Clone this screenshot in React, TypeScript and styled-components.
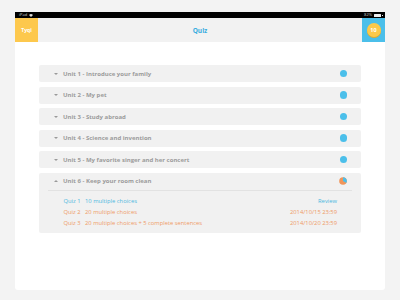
import React from "react";
import styled, { createGlobalStyle } from "styled-components";

const GlobalStyle = createGlobalStyle`
  html, body {
    margin: 0;
    padding: 0;
    background: #f3f3f3;
    font-family: "Open Sans", "Liberation Sans", sans-serif;
  }
`;

const Page = styled.div`
  width: 400px;
  height: 300px;
  box-sizing: border-box;
  padding: 12px 15px 10px;
  background: #f3f3f3;
`;

const Device = styled.div`
  height: 278px;
  background: #ffffff;
  border-radius: 0 0 3px 3px;
  display: flex;
  flex-direction: column;
  overflow: hidden;
`;

const StatusBar = styled.div`
  height: 6px;
  background: #000;
  color: #cfcfcf;
  font-size: 4px;
  line-height: 6px;
  display: flex;
  align-items: center;
  justify-content: space-between;
  padding: 0 4px;
`;

const StatusGroup = styled.div`
  display: flex;
  align-items: center;
  gap: 2px;
`;

const Battery = styled.span`
  width: 7px;
  height: 3px;
  background: #eee;
  border-radius: 0.5px;
  position: relative;
  &::after {
    content: "";
    position: absolute;
    right: -1.5px;
    top: 1px;
    width: 1px;
    height: 1px;
    background: #eee;
  }
`;

const Header = styled.div`
  height: 24px;
  background: #f2f2f2;
  display: flex;
  align-items: stretch;
`;

const CornerButton = styled.div<{ $bg: string }>`
  width: 23px;
  background: ${p => p.$bg};
  display: flex;
  align-items: center;
  justify-content: center;
  color: #fff;
  font-weight: 700;
  font-size: 5px;
`;

const Title = styled.div`
  flex: 1;
  display: flex;
  align-items: center;
  justify-content: center;
  color: #38ade0;
  font-weight: 700;
  font-size: 6.5px;
`;

const Coin = styled.div`
  width: 14px;
  height: 14px;
  border-radius: 50%;
  background: #fcc94b;
  box-shadow: 0 1px 0 #e0a92c;
  display: flex;
  align-items: center;
  justify-content: center;
  color: #fff;
  font-size: 5.5px;
  font-weight: 700;
`;

const Content = styled.div`
  padding: 23px 24px 0;
  display: flex;
  flex-direction: column;
  gap: 4.5px;
`;

const Unit = styled.div`
  background: #f1f1f1;
  border-radius: 2px;
`;

const UnitHead = styled.div<{ $open?: boolean }>`
  height: 17px;
  display: flex;
  align-items: center;
  padding: ${p => (p.$open ? "0 5px 0 6px" : "0 14px 0 15px")};
  margin: ${p => (p.$open ? "0 9px" : "0")};
  border-bottom: ${p => (p.$open ? "1px solid #e2e2e2" : "none")};
`;

const Arrow = styled.span<{ $up?: boolean }>`
  width: 0;
  height: 0;
  border-left: 2px solid transparent;
  border-right: 2px solid transparent;
  ${p =>
    p.$up
      ? "border-bottom: 2.5px solid #9a9a9a;"
      : "border-top: 2.5px solid #9a9a9a;"}
  margin-right: 5px;
`;

const UnitName = styled.span`
  flex: 1;
  color: #9c9c9c;
  font-weight: 700;
  font-size: 6px;
`;

const Dot = styled.span`
  width: 7.5px;
  height: 7.5px;
  border-radius: 50%;
  background: #4bbfea;
`;

const QuizList = styled.div`
  padding: 5.5px 24px 5px 24.5px;
  display: flex;
  flex-direction: column;
`;

const QuizRow = styled.div<{ $color: string }>`
  height: 10.7px;
  display: flex;
  align-items: center;
  color: ${p => p.$color};
  font-size: 5.8px;
`;

const QuizLabel = styled.span`
  width: 21.5px;
`;

const QuizDesc = styled.span`
  flex: 1;
`;

const units = [
  "Unit 1 - Introduce your family",
  "Unit 2 - My pet",
  "Unit 3 - Study abroad",
  "Unit 4 - Science and invention",
  "Unit 5 - My favorite singer and her concert",
];

const quizzes = [
  { label: "Quiz 1", desc: "10 multiple choices", right: "Review", color: "#4cb8e0" },
  { label: "Quiz 2", desc: "20 multiple choices", right: "2014/10/15 23:59", color: "#ef9a66" },
  {
    label: "Quiz 3",
    desc: "20 multiple choices + 5 complete sentences",
    right: "2014/10/20 23:59",
    color: "#ef9a66",
  },
];

const Pie = () => (
  <svg width="8" height="8" viewBox="0 0 8 8">
    <circle cx="4" cy="4" r="3.8" fill="#f0955a" />
    <path d="M4 4 L4 0.2 A3.8 3.8 0 0 1 7.3 5.9 Z" fill="#4bbfea" />
  </svg>
);

const App: React.FC = () => (
  <>
    <GlobalStyle />
    <Page>
      <Device>
        <StatusBar>
          <StatusGroup>
            <span>iPad</span>
            <svg width="4" height="3" viewBox="0 0 4 3">
              <path d="M0 1 A3 3 0 0 1 4 1 L2 3 Z" fill="#ddd" />
            </svg>
          </StatusGroup>
          <StatusGroup>
            <span>82%</span>
            <Battery />
          </StatusGroup>
        </StatusBar>
        <Header>
          <CornerButton $bg="#fdc84d">Tyqi</CornerButton>
          <Title>Quiz</Title>
          <CornerButton $bg="#4bbfea">
            <Coin>10</Coin>
          </CornerButton>
        </Header>
        <Content>
          {units.map(u => (
            <Unit key={u}>
              <UnitHead>
                <Arrow />
                <UnitName>{u}</UnitName>
                <Dot />
              </UnitHead>
            </Unit>
          ))}
          <Unit>
            <UnitHead $open>
              <Arrow $up />
              <UnitName>Unit 6 - Keep your room clean</UnitName>
              <Pie />
            </UnitHead>
            <QuizList>
              {quizzes.map(q => (
                <QuizRow key={q.label} $color={q.color}>
                  <QuizLabel>{q.label}</QuizLabel>
                  <QuizDesc>{q.desc}</QuizDesc>
                  <span>{q.right}</span>
                </QuizRow>
              ))}
            </QuizList>
          </Unit>
        </Content>
      </Device>
    </Page>
  </>
);

export default App;
